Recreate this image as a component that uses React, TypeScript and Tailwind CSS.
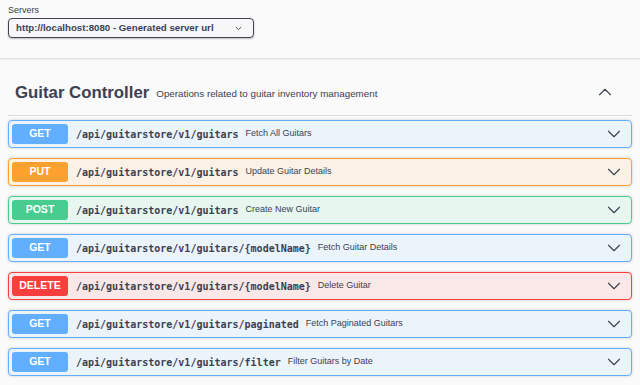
import { ChevronDown, ChevronUp } from 'lucide-react';

type Op = {
  method: 'GET' | 'PUT' | 'POST' | 'DELETE';
  path: string;
  summary: string;
};

const OPS: Op[] = [
  { method: 'GET', path: '/api/guitarstore/v1/guitars', summary: 'Fetch All Guitars' },
  { method: 'PUT', path: '/api/guitarstore/v1/guitars', summary: 'Update Guitar Details' },
  { method: 'POST', path: '/api/guitarstore/v1/guitars', summary: 'Create New Guitar' },
  { method: 'GET', path: '/api/guitarstore/v1/guitars/{modelName}', summary: 'Fetch Guitar Details' },
  { method: 'DELETE', path: '/api/guitarstore/v1/guitars/{modelName}', summary: 'Delete Guitar' },
  { method: 'GET', path: '/api/guitarstore/v1/guitars/paginated', summary: 'Fetch Paginated Guitars' },
  { method: 'GET', path: '/api/guitarstore/v1/guitars/filter', summary: 'Filter Guitars by Date' },
];

const STYLES: Record<Op['method'], { block: string; badge: string }> = {
  GET: { block: 'border-[#61affe] bg-[#ebf3fb]', badge: 'bg-[#61affe]' },
  PUT: { block: 'border-[#fca130] bg-[#fbf1e6]', badge: 'bg-[#fca130]' },
  POST: { block: 'border-[#49cc90] bg-[#e8f6f0]', badge: 'bg-[#49cc90]' },
  DELETE: { block: 'border-[#f93e3e] bg-[#fae7e7]', badge: 'bg-[#f93e3e]' },
};

export default function App() {
  return (
    <div className="min-h-[385px] w-[640px] overflow-hidden bg-[#fafafa] font-['Liberation_Sans',Arial,sans-serif] text-[#3b4151]">
      {/* servers */}
      <div className="bg-[#fafafa] px-2 pt-[5px] pb-5 shadow-[0_1px_2px_0_rgba(0,0,0,0.15)]">
        <div className="text-[9px] leading-[11px] text-[#3b4151]">Servers</div>
        <div className="mt-0.5 flex h-[20px] w-[246px] items-center justify-between rounded-[4px] border-[1.5px] border-[#41444e] bg-[#f7f7f7] pl-[7px] pr-[10px] shadow-[0_1px_2px_0_rgba(0,0,0,0.25)]">
          <span className="text-[9.7px] font-bold text-[#3b4151]">http://localhost:8080 - Generated server url</span>
          <ChevronDown size={9} strokeWidth={2.5} className="text-[#3b4151]" />
        </div>
      </div>

      <div className="mt-[1px]">
        {/* tag header */}
        <div className="mx-2 flex h-[57px] items-end border-b border-[#dcdcdc] pb-[11px] pl-[7px] pr-[16px]">
          <h3 className="text-[16.8px] leading-[22px] font-bold text-[#3b4151]">Guitar Controller</h3>
          <span className="mb-[3px] ml-[7px] text-[9.8px] leading-[14px] text-[#3b4151]">
            Operations related to guitar inventory management
          </span>
          <ChevronUp size={22} strokeWidth={1.2} className="mb-[1px] ml-auto text-[#3b4151]" />
        </div>

        {/* operations */}
        <div className="mx-2 mt-[4px] flex flex-col gap-[10px]">
          {OPS.map((op, i) => (
            <div
              key={i}
              className={`flex h-[28px] items-center rounded-[4px] border px-[3px] shadow-[0_0_3px_rgba(0,0,0,0.19)] ${STYLES[op.method].block}`}
            >
              <span
                className={`flex h-[20px] w-[56px] items-center justify-center rounded-[3px] text-[10.5px] font-bold text-white ${STYLES[op.method].badge}`}
              >
                {op.method}
              </span>
              <span className="ml-[8px] font-['DejaVu_Sans_Mono',monospace] text-[10px] font-bold text-[#3b4151]">
                {op.path}
              </span>
              <span className="ml-[7px] text-[9px] text-[#3b4151]">{op.summary}</span>
              <ChevronDown size={22} strokeWidth={1.2} className="ml-auto mr-[3px] text-[#3b4151]" />
            </div>
          ))}
        </div>
      </div>
    </div>
  );
}
